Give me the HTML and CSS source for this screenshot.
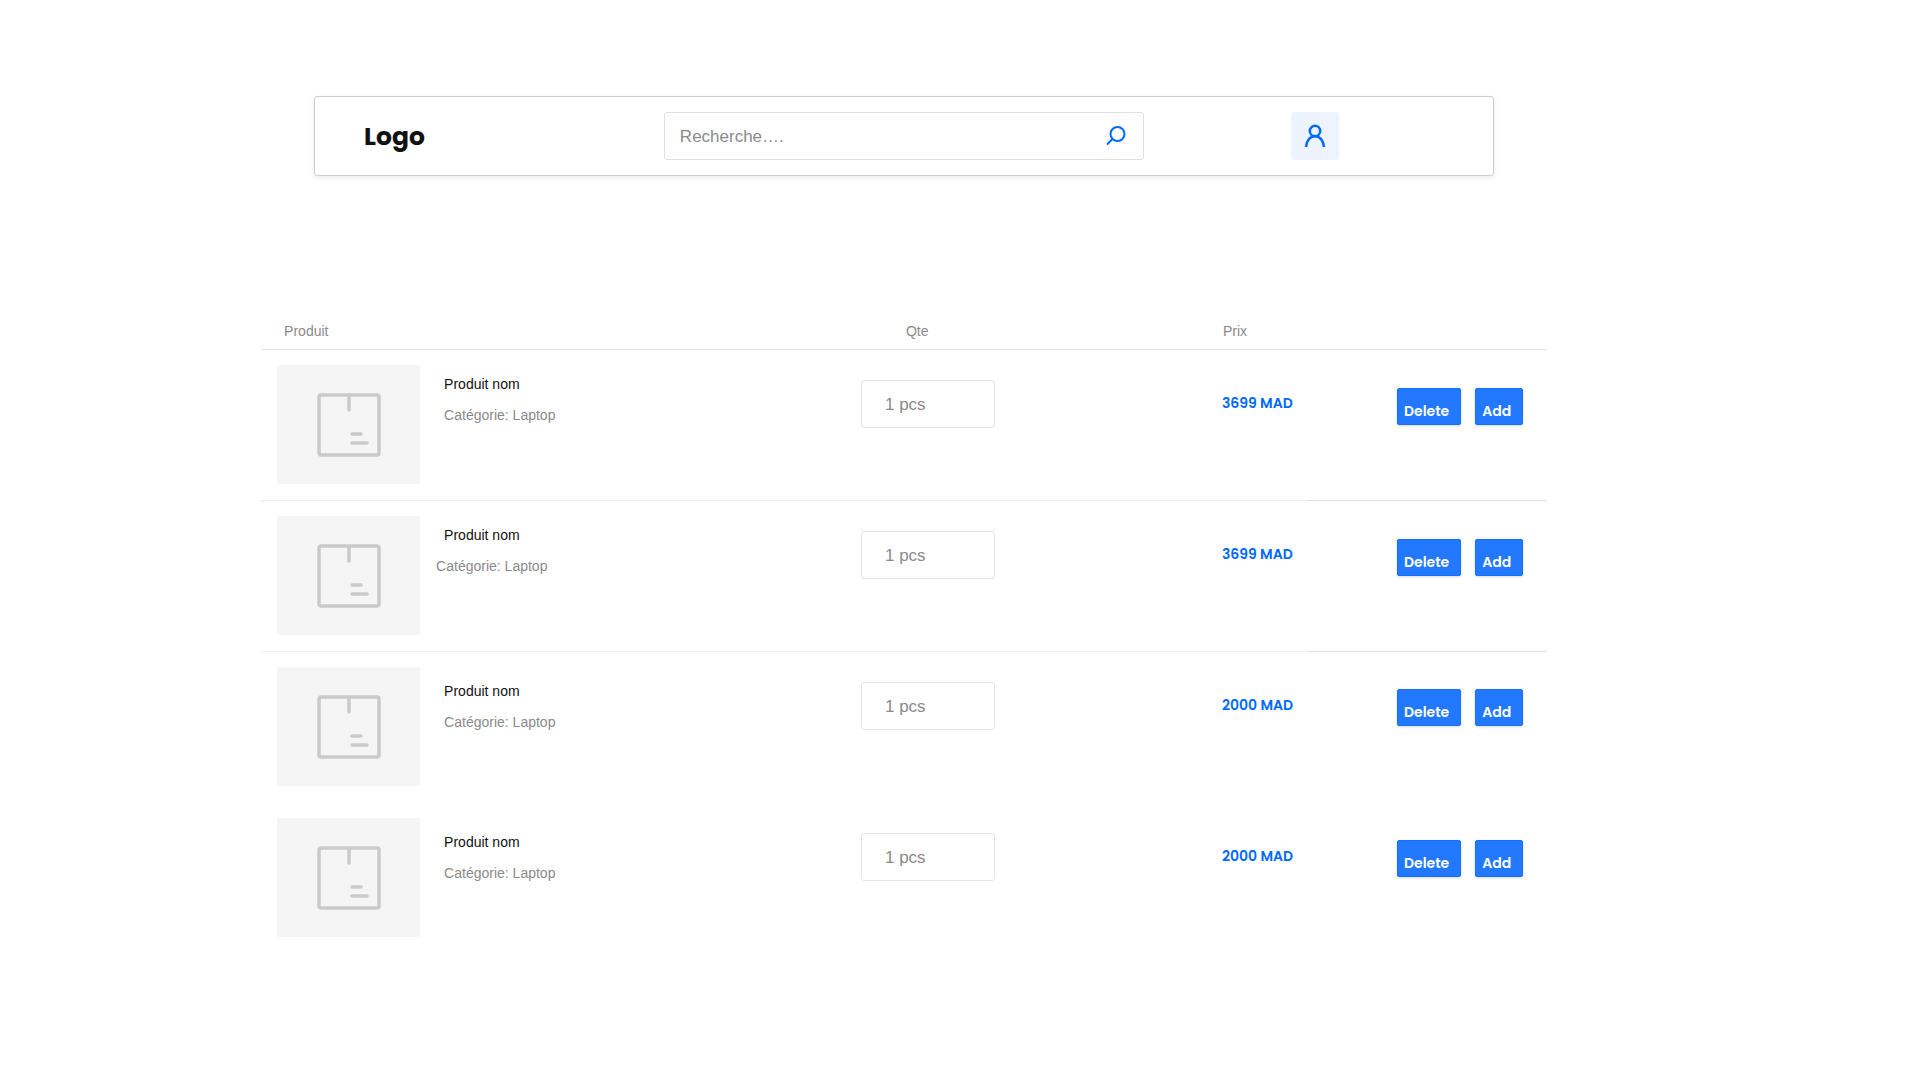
FILE: index.html
```html
<!DOCTYPE html>
<html lang="fr">
<head>
<meta charset="utf-8">
<meta name="viewport" content="width=device-width, initial-scale=1">
<title>Produits</title>
<link rel="stylesheet" href="styles.css">
</head>
<body>
<svg class="sprite" aria-hidden="true">
  <symbol id="package" viewBox="0 0 64 64">
    <rect x="2" y="2" width="60" height="60" rx="2"/>
    <path d="M32 3v14M35 41h9M35 50h15"/>
  </symbol>
</svg>
<header class="topbar">
  <a class="logo" href="#">Logo</a>
  <form class="search" role="search">
    <input class="search-input" type="text" placeholder="Recherche…." aria-label="Recherche">
    <button class="search-button" type="button" aria-label="Rechercher">
      <svg class="search-icon" viewBox="0 0 20 20"><circle cx="11.500" cy="8" r="7"/><path d="M6.500 13L1 18.500"/></svg>
    </button>
  </form>
  <div class="account">
    <button class="account-button" type="button" aria-label="Mon compte">
      <svg class="account-icon" viewBox="0 0 24 24"><circle cx="12" cy="7" r="5.200"/><path d="M3 23C4 16 7.500 12.300 12 12.300S20 16 21 23"/></svg>
    </button>
  </div>
</header>
<main>
  <table class="products">
    <colgroup>
      <col class="col-product"><col class="col-qty"><col class="col-price"><col class="col-actions">
    </colgroup>
    <thead>
      <tr><th class="head-product" scope="col">Produit</th><th class="head-qty" scope="col">Qte</th><th class="head-price" scope="col">Prix</th><td></td></tr>
    </thead>
    <tbody>
      <tr class="row-ruled">
        <td><div class="product"><div class="thumb"><svg class="thumb-icon"><use href="#package"/></svg></div><div class="info"><p class="name">Produit nom</p><p class="category">Catégorie: Laptop</p></div></div></td>
        <td><input class="qty" type="text" value="1 pcs" aria-label="Quantité"></td>
        <td class="price">3699 MAD</td>
        <td><div class="actions"><button class="button" type="button">Delete</button><button class="button" type="button">Add</button></div></td>
      </tr>
      <tr class="row-ruled row-faint">
        <td><div class="product"><div class="thumb"><svg class="thumb-icon"><use href="#package"/></svg></div><div class="info"><p class="name">Produit nom</p><p class="category category-outdent">Catégorie: Laptop</p></div></div></td>
        <td><input class="qty" type="text" value="1 pcs" aria-label="Quantité"></td>
        <td class="price">3699 MAD</td>
        <td><div class="actions"><button class="button" type="button">Delete</button><button class="button" type="button">Add</button></div></td>
      </tr>
      <tr class="row-low">
        <td><div class="product"><div class="thumb"><svg class="thumb-icon"><use href="#package"/></svg></div><div class="info"><p class="name">Produit nom</p><p class="category">Catégorie: Laptop</p></div></div></td>
        <td><input class="qty" type="text" value="1 pcs" aria-label="Quantité"></td>
        <td class="price">2000 MAD</td>
        <td><div class="actions"><button class="button" type="button">Delete</button><button class="button" type="button">Add</button></div></td>
      </tr>
      <tr class="row-low">
        <td><div class="product"><div class="thumb"><svg class="thumb-icon"><use href="#package"/></svg></div><div class="info"><p class="name">Produit nom</p><p class="category">Catégorie: Laptop</p></div></div></td>
        <td><input class="qty" type="text" value="1 pcs" aria-label="Quantité"></td>
        <td class="price">2000 MAD</td>
        <td><div class="actions"><button class="button" type="button">Delete</button><button class="button" type="button">Add</button></div></td>
      </tr>
    </tbody>
  </table>
</main>
</body>
</html>
```
FILE: styles.css
```css
:root {
  --blue: #006aff;
  --grey: #8a8a8a;
  --body: "Liberation Sans", Arial, sans-serif;
  --display: Poppins, Inter, sans-serif;
}

* { box-sizing: border-box; }

body {
  margin: 0;
  padding: 96px 19.5% 64px 13.6%;
  background: #fff;
  color: #111;
  font: 14px/20px var(--body);
}

p { margin: 0; }
button { padding: 0; border: 0; background: none; cursor: pointer; }
.sprite { display: none; }

.topbar {
  display: grid;
  grid-template-columns: 1fr minmax(0, 480px) 1fr;
  align-items: center;
  margin: 0 52px 128px 53px;
  padding: 15px 0;
  border: 1px solid #cbcccd;
  border-radius: 3px;
  box-shadow: 0 2px 6px rgba(0, 0, 0, .08);
}

.logo {
  padding: 2px 0 0 49px;
  color: #111;
  font: 700 25px/32px var(--display);
  text-decoration: none;
}

.search {
  display: flex;
  align-items: center;
  height: 48px;
  padding: 0 17px 0 15px;
  border: 1px solid #dddedf;
  border-radius: 3px;
}

.search-input {
  flex: 1;
  min-width: 0;
  padding: 2px 0 0;
  border: 0;
  outline: 0;
  background: none;
  font: 17px/24px var(--body);
}
.search-input::placeholder { color: var(--grey); opacity: 1; }
.search-button { display: flex; }
.search-icon { width: 20px; height: 20px; fill: none; stroke: var(--blue); stroke-width: 2; }

.account { padding-left: 147px; }
.account-button {
  display: flex;
  align-items: center;
  justify-content: center;
  width: 48px;
  height: 48px;
  border-radius: 3px;
  background: #edf4ff;
}
.account-icon { width: 24px; height: 24px; fill: none; stroke: var(--blue); stroke-width: 2.500; }

.products {
  width: 100%;
  table-layout: fixed;
  border-collapse: separate;
  border-spacing: 0;
}
.col-product { width: 46.7%; }
.col-qty { width: 28.1%; }
.col-price { width: 6.7%; }
.col-actions { width: 18.5%; }

th, td { padding: 0; text-align: left; vertical-align: top; }
thead th, thead td {
  height: 46px;
  padding-top: 17px;
  border-bottom: 1px solid #e1e2e3;
  color: var(--grey);
  font-weight: 400;
}
thead .head-product { padding-left: 23px; }
thead .head-qty { padding-left: 45px; }
thead .head-price { padding-left: 1px; }

tbody td { height: 151px; border-bottom: 1px solid transparent; }
.row-ruled td { border-color: #ebebeb; }
.row-faint td { border-color: #f3f3f3; }
.row-ruled td:last-child { border-color: #dcdddd; }

.product { display: flex; gap: 24px; padding: 15px 0 0 16px; }
.thumb {
  display: flex;
  align-items: center;
  justify-content: center;
  width: 143px;
  height: 119px;
  border-radius: 2px;
  background: #f5f5f5;
}
.thumb-icon {
  width: 64px;
  height: 64px;
  fill: none;
  stroke: #cacaca;
  stroke-width: 3.500;
  stroke-linecap: round;
}
.info { padding-top: 9px; }
.row-low .info { padding-top: 14px; }
.category { margin-top: 11px; color: var(--grey); }
.category-outdent { margin-left: -8px; }

.qty {
  display: block;
  width: 134px;
  height: 48px;
  margin-top: 30px;
  padding: 2px 23px 0;
  border: 1px solid #e3e4e5;
  border-radius: 3px;
  color: var(--grey);
  font: 17px/24px var(--body);
}

.price {
  padding-top: 43px;
  color: var(--blue);
  font: 600 14px/20px var(--display);
  white-space: nowrap;
}

.actions { display: flex; gap: 14px; padding: 38px 0 0 89px; }
.row-low .actions { padding-top: 37px; }
.button {
  height: 37px;
  padding: 8px 11px 0 6px;
  border: 1px solid #1570ff;
  border-radius: 2px;
  background: #2279ff;
  box-shadow: 0 1px 3px rgba(0, 0, 0, .16);
  color: #fff;
  font: 600 14px/20px var(--display);
}
```
